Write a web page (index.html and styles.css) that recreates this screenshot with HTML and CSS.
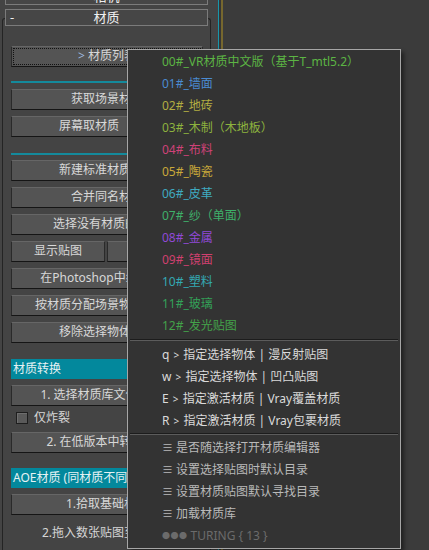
FILE: index.html
```html
<!DOCTYPE html>
<html lang="zh">
<head>
<meta charset="utf-8">
<link rel="stylesheet" href="styles.css">
</head>
<body>
<div class="left">
  <div class="hdr hdr-top"><span class="minus">-</span><span class="hdr-title">相机</span><span></span></div>
  <div class="hdr hdr-main"><span class="minus">-</span><span class="hdr-title">材质</span><span></span></div>
  <div class="frame">
    <div class="btn focus"><span class="arrow">&gt;</span>&nbsp;材质列表</div>
    <div class="cyan-sep sep-a"></div>
    <div class="btn m6">获取场景材质</div>
    <div class="row m6">
      <div class="btn grow">屏幕取材质</div>
      <div class="btn small">吸管</div>
    </div>
    <div class="cyan-sep sep-b"></div>
    <div class="btn m5">新建标准材质替换</div>
    <div class="btn m6">合并同名材质</div>
    <div class="btn m6">选择没有材质的物体</div>
    <div class="row m6">
      <div class="btn half">显示贴图</div>
      <div class="btn grow">隐藏贴图</div>
    </div>
    <div class="btn m6">在Photoshop中编辑贴图</div>
    <div class="btn m6">按材质分配场景物体到图层</div>
    <div class="btn m6">移除选择物体材质</div>
    <div class="teal sec-a">材质转换</div>
    <div class="btn m6">1. 选择材质库文件并转换</div>
    <div class="chk-row">
      <span class="chk"></span><span class="chk-label">仅炸裂</span>
    </div>
    <div class="btn m8">2. 在低版本中转换材质</div>
    <div class="teal sec-b">AOE材质 (同材质不同贴图)</div>
    <div class="btn m6">1.拾取基础材质</div>
    <div class="flat">2.拖入数张贴图至对象上</div>
  </div>
</div>
<div class="line-cyan"></div>
<div class="line-gap"></div>
<div class="line-olive"></div>
<div class="right"></div>

<div class="menu">
  <div class="mi c00">00#_VR材质中文版（基于T_mtl5.2）</div>
  <div class="mi c01">01#_墙面</div>
  <div class="mi c02">02#_地砖</div>
  <div class="mi c03">03#_木制（木地板）</div>
  <div class="mi c04">04#_布料</div>
  <div class="mi c05">05#_陶瓷</div>
  <div class="mi c06">06#_皮革</div>
  <div class="mi c07">07#_纱（单面）</div>
  <div class="mi c08">08#_金属</div>
  <div class="mi c09">09#_镜面</div>
  <div class="mi c10">10#_塑料</div>
  <div class="mi c11">11#_玻璃</div>
  <div class="mi c12">12#_发光贴图</div>
  <div class="msep msep-a"></div>
  <div class="mi cmd">q <span class="gt">&gt;</span> 指定选择物体 | 漫反射贴图</div>
  <div class="mi cmd">w <span class="gt">&gt;</span> 指定选择物体 | 凹凸贴图</div>
  <div class="mi cmd">E <span class="gt">&gt;</span> 指定激活材质 | Vray覆盖材质</div>
  <div class="mi cmd">R <span class="gt">&gt;</span> 指定激活材质 | Vray包裹材质</div>
  <div class="msep msep-b"></div>
  <div class="mi opt"><span class="eq">≡</span> 是否随选择打开材质编辑器</div>
  <div class="mi opt"><span class="eq">≡</span> 设置选择贴图时默认目录</div>
  <div class="mi opt"><span class="eq">≡</span> 设置材质贴图默认寻找目录</div>
  <div class="mi opt"><span class="eq">≡</span> 加载材质库</div>
  <div class="mi dim"><span class="dots">●●●</span> TURING { 13 }</div>
</div>
</body>
</html>
```
FILE: styles.css
```css
* { box-sizing: border-box; }
html, body { margin: 0; padding: 0; }
body {
  width: 429px;
  height: 550px;
  overflow: hidden;
  background: #3b3b3b;
  display: flex;
  font-family: "Noto Sans", "Noto Sans CJK SC", sans-serif;
  font-size: 12px;
  color: #d6d6d6;
}
.left {
  width: 218px;
  height: 550px;
  background: #444444;
  display: flex;
  flex-direction: column;
  overflow: hidden;
  flex: none;
}
.line-cyan { width: 1px; background: #1796ab; flex: none; }
.line-gap { width: 2px; background: #363636; flex: none; }
.line-olive { width: 2px; background: #76672e; flex: none; }
.right { flex: 1; background: #3b3b3b; }

.hdr {
  position: relative;
  z-index: 1;
  margin-left: 5px;
  width: 203px;
  height: 17px;
  border: 1px solid #7b7b7b;
  background: #464646;
  display: grid;
  grid-template-columns: 20px 1fr 20px;
  align-items: center;
  line-height: 15px;
  color: #f0f0f0;
  font-size: 13px;
  flex: none;
}
.hdr-top { margin-top: -12px; }
.hdr-main { margin-top: 4px; }
.minus { padding-left: 4px; }
.hdr-title { text-align: center; }

.frame {
  margin-top: -8px;
  margin-left: 2px;
  width: 209px;
  flex: 1;
  border: 1px solid #242424;
  border-bottom: none;
  border-radius: 3px 3px 0 0;
  padding: 27px 7px 0 8px;
  display: flex;
  flex-direction: column;
}
.btn {
  height: 21px;
  flex: none;
  background: #545454;
  border: 1px solid;
  border-color: #666666 #2a2a2a #151515 #2a2a2a;
  text-align: center;
  line-height: 18px;
  white-space: nowrap;
  overflow: hidden;
  color: #d8d8d8;
}
.focus { outline: 1px dotted #111; outline-offset: -3px; }
.arrow { color: #9fb8dc; }
.m5 { margin-top: 5px; }
.m6 { margin-top: 6px; }
.m8 { margin-top: 8px; }
.row { display: flex; gap: 2px; flex: none; }
.row .btn { margin-top: 0; }
.grow { flex: 1; }
.small { width: 34px; }
.half { width: 94px; }
.row:first-of-type .grow { margin-left: -1px; }

.cyan-sep { height: 2px; background: #148a9c; flex: none; }
.sep-a { margin-top: 14px; }
.sep-b { margin-top: 16px; }

.teal {
  height: 20px;
  flex: none;
  background: #03889c;
  color: #e6f2f4;
  padding-left: 2px;
  line-height: 20px;
  white-space: nowrap;
  overflow: hidden;
}
.sec-a { margin-top: 16px; }
.sec-b { margin-top: 15px; }

.chk-row {
  margin-top: 6px;
  height: 12px;
  flex: none;
  display: flex;
  align-items: center;
  padding-left: 5px;
}
.chk {
  width: 12px;
  height: 12px;
  background: #5a5a5a;
  border: 1px solid #1e1e1e;
  box-shadow: inset 1px 1px 0 #6e6e6e;
}
.chk-label { margin-left: 6px; color: #d6d6d6; line-height: 12px; }

.flat {
  margin-top: 8px;
  height: 20px;
  flex: none;
  text-align: center;
  line-height: 20px;
  white-space: nowrap;
  overflow: hidden;
  color: #d6d6d6;
}

.menu {
  position: absolute;
  left: 127px;
  top: 49px;
  width: 274px;
  height: 500px;
  background: #333333;
  border: 1px solid #a6a6a6;
  box-shadow: 3px 3px 4px rgba(0, 0, 0, 0.45);
  padding-top: 1px;
  z-index: 5;
}
.mi {
  height: 22px;
  line-height: 22px;
  padding-left: 34px;
  white-space: nowrap;
}
.c00 { color: #5cb544; }
.c01 { color: #4a8bd2; }
.c02 { color: #b2ad42; }
.c03 { color: #8db23e; }
.c04 { color: #cf4278; }
.c05 { color: #c9a93a; }
.c06 { color: #3faac0; }
.c07 { color: #3fb06a; }
.c08 { color: #9049d6; }
.c09 { color: #d0406f; }
.c10 { color: #33a9b3; }
.c11 { color: #33a259; }
.c12 { color: #43a24a; }
.cmd { color: #dadada; }
.gt { font-size: 10px; margin: 0 1px; }
.opt { color: #b9b9b9; }
.eq { font-size: 11px; }
.dim { color: #6b6b6b; }
.dots { font-size: 8px; letter-spacing: 0.5px; vertical-align: 1px; }

.msep {
  margin-left: 2px;
  margin-right: 2px;
  height: 2px;
  border-top: 1px solid #1c1c1c;
  border-bottom: 1px solid #5c5c5c;
}
.msep-a { margin-top: 2px; margin-bottom: 3px; }
.msep-b { margin-top: 1px; margin-bottom: 2px; }
```
